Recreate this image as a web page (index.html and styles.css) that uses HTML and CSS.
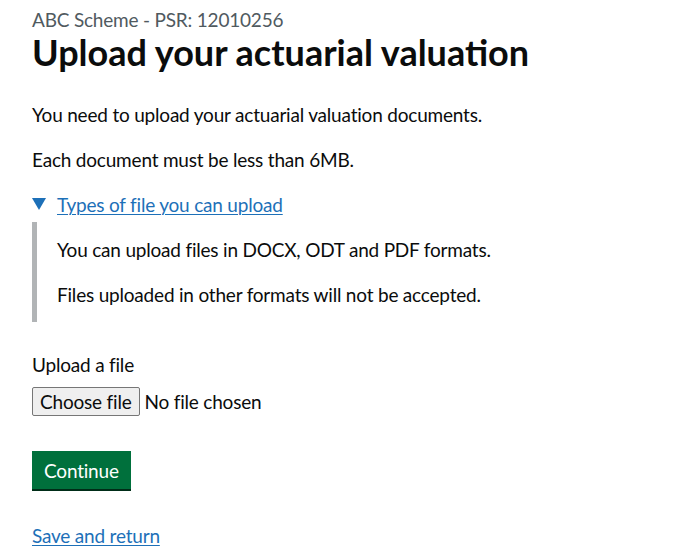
FILE: index.html
```html
<!DOCTYPE html>
<html lang="en">
<head>
<meta charset="utf-8">
<title>Upload your actuarial valuation</title>
<link rel="stylesheet" href="styles.css">
</head>
<body>
<main class="page">
  <span class="caption">ABC Scheme - PSR: 12010256</span>
  <h1 class="heading">Upload your actuarial valuation</h1>
  <p class="body">You need to upload your actuarial valuation documents.</p>
  <p class="body">Each document must be less than 6MB.</p>
  <details class="details" open>
    <summary class="details-summary"><span class="details-text">Types of file you can upload</span></summary>
    <div class="details-content">
      <p class="body">You can upload files in DOCX, ODT and PDF formats.</p>
      <p class="body last">Files uploaded in other formats will not be accepted.</p>
    </div>
  </details>
  <div class="form-group">
    <label class="label" for="file">Upload a file</label>
    <div class="file-row">
      <input class="file-hidden" id="file" type="file">
      <label class="file-button" for="file">Choose file</label>
      <span class="file-status">No file chosen</span>
    </div>
  </div>
  <button class="button" type="button">Continue</button>
  <p class="body"><a class="link" href="#">Save and return</a></p>
</main>
</body>
</html>
```

FILE: styles.css
```css
html, body {
  margin: 0;
  padding: 0;
  background: #ffffff;
}
body {
  font-family: Lato, "Liberation Sans", Arial, sans-serif;
  color: #0b0c0c;
  letter-spacing: -0.2px;
}
.page {
  padding: 7px 32px 0 32px;
  display: flex;
  flex-direction: column;
  align-items: flex-start;
}
.caption {
  display: block;
  font-size: 19px;
  line-height: 25px;
  color: #505a5f;
}
.heading {
  font-size: 36px;
  line-height: 40px;
  font-weight: 700;
  letter-spacing: 0;
  margin: 0 0 30px 0;
}
.body {
  font-size: 19px;
  line-height: 25px;
  margin: 0 0 20px 0;
}
.body.last { margin-bottom: 0; }
.details {
  margin-bottom: 30px;
  font-size: 19px;
  line-height: 25px;
}
.details-summary {
  display: inline-block;
  position: relative;
  padding-left: 25px;
  margin-bottom: 5px;
  color: #1d70b8;
  cursor: pointer;
  list-style: none;
}
.details-summary::-webkit-details-marker { display: none; }
.details-summary::before {
  content: "";
  position: absolute;
  left: 0;
  top: 6px;
  width: 0;
  height: 0;
  border-style: solid;
  border-color: transparent;
  border-width: 12.12px 7px 0 7px;
  border-top-color: #1d70b8;
}
.details-text {
  text-decoration: underline;
  text-decoration-thickness: 1px;
  text-underline-offset: 0.12em;
}
.details-content {
  padding: 15px 20px 15px 20px;
  border-left: 5px solid #b1b4b6;
}
.form-group {
  display: flex;
  flex-direction: column;
  align-items: flex-start;
  margin-bottom: 30px;
}
.label {
  font-size: 19px;
  line-height: 25px;
  margin-bottom: 5px;
}
.file-row {
  display: flex;
  align-items: center;
  gap: 5px;
  padding: 5px 0;
  font-size: 19px;
}
.file-hidden {
  position: absolute;
  width: 1px;
  height: 1px;
  opacity: 0;
  overflow: hidden;
}
.file-button {
  display: inline-block;
  font-size: 19px;
  line-height: 23px;
  padding: 2px 7px;
  border: 1px solid #767676;
  border-radius: 2px;
  background: #efefef;
  color: #0b0c0c;
  cursor: pointer;
}
.file-status {
  font-size: 19px;
  line-height: 25px;
}
.button {
  font-family: inherit;
  font-size: 19px;
  line-height: 19px;
  letter-spacing: -0.2px;
  color: #ffffff;
  background: #00703c;
  border: 2px solid transparent;
  border-radius: 0;
  box-shadow: 0 2px 0 #002d18;
  padding: 8px 10px 7px;
  margin: 0 0 34px 0;
  cursor: pointer;
}
.link {
  color: #1d70b8;
  text-decoration: underline;
  text-decoration-thickness: 1px;
  text-underline-offset: 0.12em;
}
```
